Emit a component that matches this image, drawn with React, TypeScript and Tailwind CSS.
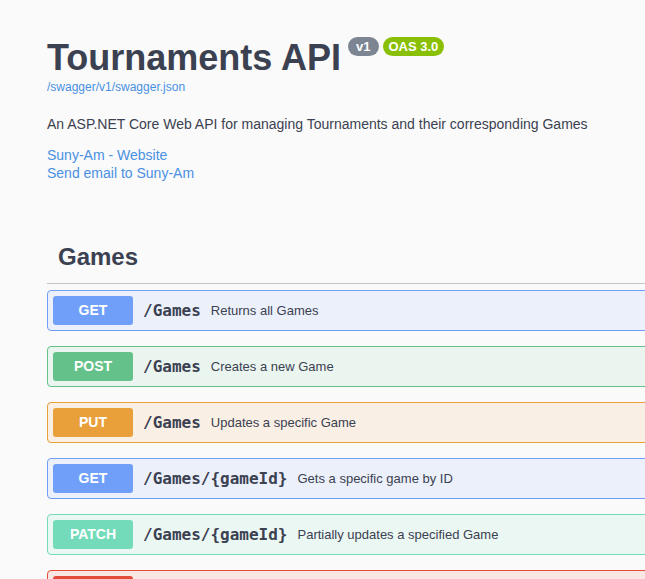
import React from 'react';

type Op = {
  method: string;
  path: string;
  summary: string;
  badge: string;
  border: string;
  bg: string;
};

const ops: Op[] = [
  { method: 'GET', path: '/Games', summary: 'Returns all Games', badge: 'bg-[#6f9ff8]', border: 'border-[#6f9ff8]', bg: 'bg-[#ebf0fb]' },
  { method: 'POST', path: '/Games', summary: 'Creates a new Game', badge: 'bg-[#65c18a]', border: 'border-[#65c18a]', bg: 'bg-[#eaf5ef]' },
  { method: 'PUT', path: '/Games', summary: 'Updates a specific Game', badge: 'bg-[#e9a03b]', border: 'border-[#e9a03b]', bg: 'bg-[#faefe4]' },
  { method: 'GET', path: '/Games/{gameId}', summary: 'Gets a specific game by ID', badge: 'bg-[#6f9ff8]', border: 'border-[#6f9ff8]', bg: 'bg-[#ebf0fb]' },
  { method: 'PATCH', path: '/Games/{gameId}', summary: 'Partially updates a specified Game', badge: 'bg-[#73dbba]', border: 'border-[#73dbba]', bg: 'bg-[#ebf7f3]' },
  { method: 'DELETE', path: '/Games/{gameId}', summary: 'Deletes a specified Game', badge: 'bg-[#e04b3a]', border: 'border-[#e04b3a]', bg: 'bg-[#fae6e3]' },
];

export default function App() {
  return (
    <div className="w-[645px] h-[579px] overflow-hidden bg-[#fafafa] text-[#3b4151] font-['Liberation_Sans',Arial,sans-serif]">
      <div className="pl-[47px] w-[720px]">
        {/* Info header */}
        <div className="pt-[36px]">
          <div className="flex items-start">
            <h1 className="text-[36px] leading-[44px] font-bold">Tournaments API</h1>
            <div className="flex gap-[4px] ml-[7px] mt-[1px]">
              <span className="h-[19px] px-[8px] rounded-full bg-[#7d8492] text-white text-[13px] font-bold leading-[19px]">v1</span>
              <span className="h-[19px] px-[6px] rounded-full bg-[#89bf04] text-white text-[13px] font-bold leading-[19px]">OAS 3.0</span>
            </div>
          </div>
          <a className="block text-[12px] leading-[15px] text-[#4990e2]">/swagger/v1/swagger.json</a>
          <p className="mt-[19px] text-[14px] leading-[20px]">
            An ASP.NET Core Web API for managing Tournaments and their corresponding Games
          </p>
          <div className="mt-[12px] text-[14px] leading-[18px] text-[#4990e2]">
            <a className="block">Suny-Am - Website</a>
            <a className="block">Send email to Suny-Am</a>
          </div>
        </div>

        {/* Tag section */}
        <div className="mt-[59px]">
          <div className="pl-[11px] pb-[10px] border-b border-[#c4c5c9]">
            <h3 className="text-[24px] leading-[32px] font-bold">Games</h3>
          </div>
          <div className="mt-[6px] flex flex-col gap-[15px]">
            {ops.map((op, i) => (
              <div key={i} className={`flex items-center p-[5px] border rounded-[4px] ${op.border} ${op.bg}`}>
                <span className={`w-[80px] h-[29px] rounded-[3px] text-white text-[14px] font-bold flex items-center justify-center ${op.badge}`}>
                  {op.method}
                </span>
                <span className="ml-[10px] font-['DejaVu_Sans_Mono',monospace] font-bold text-[16px]">{op.path}</span>
                <span className="ml-[10px] text-[13px]">{op.summary}</span>
              </div>
            ))}
          </div>
        </div>
      </div>
    </div>
  );
}
